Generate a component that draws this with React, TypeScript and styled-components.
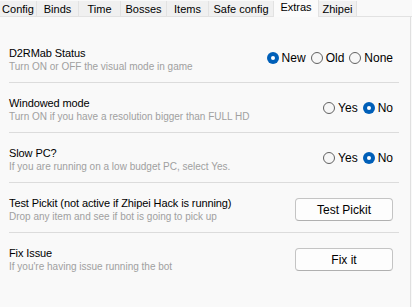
import { useState } from "react";
import styled, { createGlobalStyle } from "styled-components";

const GlobalStyle = createGlobalStyle`
  html, body {
    margin: 0;
    padding: 0;
    background: #f9f9f9;
  }
  body {
    font-family: "Liberation Sans", Arial, sans-serif;
  }
`;

const Window = styled.div`
  width: 412px;
  height: 307px;
  display: flex;
  flex-direction: column;
  background: #f9f9f9;
  overflow: hidden;
`;

const TabBar = styled.div`
  display: flex;
  align-items: flex-end;
  height: 17px;
  flex-shrink: 0;
`;

const Tab = styled.div<{ $active?: boolean; $w: number }>`
  box-sizing: border-box;
  width: ${({ $w }) => $w}px;
  height: ${({ $active }) => ($active ? "17px" : "16px")};
  display: flex;
  align-items: ${({ $active }) => ($active ? "flex-start" : "center")};
  justify-content: center;
  padding-top: 1px;
  font-size: 11px;
  color: #000;
  background: ${({ $active }) => ($active ? "#fbfbfb" : "#f0f0f0")};
  border-right: 1px solid #e2e2e2;
  border-bottom: ${({ $active }) => ($active ? "none" : "1px solid #e2e2e2")};
  white-space: nowrap;
`;

const TabFill = styled.div`
  flex: 1;
  height: 16px;
  border-bottom: 1px solid #e2e2e2;
`;

const Panel = styled.div`
  flex: 1;
  width: 411px;
  box-sizing: border-box;
  border-right: 1px solid #e0e0e0;
  padding: 16px 11px 0 9px;
`;

const Row = styled.div<{ $last?: boolean }>`
  display: flex;
  align-items: center;
  justify-content: space-between;
  height: 49px;
  border-bottom: ${({ $last }) => ($last ? "none" : "1px solid #dcdcdc")};
`;

const TextBlock = styled.div`
  display: flex;
  flex-direction: column;
  padding-top: 4px;
`;

const Title = styled.div`
  font-size: 11px;
  line-height: 13px;
  letter-spacing: -0.1px;
  color: #000;
`;

const Subtitle = styled.div`
  font-size: 10px;
  line-height: 13px;
  color: #a0a0a0;
`;

const RadioGroup = styled.div`
  display: flex;
  align-items: center;
  gap: 5px;
  margin-right: 6px;
`;

const RadioLabel = styled.label`
  display: flex;
  align-items: center;
  gap: 3px;
  font-size: 12px;
  color: #000;
  cursor: pointer;
`;

const RadioDot = styled.span<{ $on: boolean }>`
  box-sizing: border-box;
  width: 12px;
  height: 12px;
  border-radius: 50%;
  display: inline-flex;
  align-items: center;
  justify-content: center;
  border: ${({ $on }) => ($on ? "none" : "1px solid #616161")};
  background: ${({ $on }) => ($on ? "#005fb8" : "#f7f7f7")};
  &::after {
    content: "";
    width: 4px;
    height: 4px;
    border-radius: 50%;
    background: #fff;
    display: ${({ $on }) => ($on ? "block" : "none")};
  }
`;

const ActionButton = styled.button`
  box-sizing: border-box;
  width: 98px;
  height: 23px;
  margin-right: 6px;
  margin-top: 4px;
  background: #fdfdfd;
  border: 1px solid #c4c4c4;
  border-bottom-color: #b0b0b0;
  border-radius: 4px;
  font-family: "Liberation Sans", Arial, sans-serif;
  font-size: 12px;
  color: #000;
  cursor: pointer;
`;

const tabs = [
  { name: "Config", w: 37 },
  { name: "Binds", w: 42 },
  { name: "Time", w: 42 },
  { name: "Bosses", w: 46 },
  { name: "Items", w: 42 },
  { name: "Safe config", w: 65 },
  { name: "Extras", w: 45 },
  { name: "Zhipei", w: 38 },
];

interface RadiosProps {
  options: string[];
  value: string;
  onChange: (v: string) => void;
}

const Radios = ({ options, value, onChange }: RadiosProps) => (
  <RadioGroup>
    {options.map((o) => (
      <RadioLabel key={o} onClick={() => onChange(o)}>
        <RadioDot $on={o === value} />
        {o}
      </RadioLabel>
    ))}
  </RadioGroup>
);

export default function App() {
  const [status, setStatus] = useState("New");
  const [windowed, setWindowed] = useState("No");
  const [slow, setSlow] = useState("No");

  return (
    <Window>
      <GlobalStyle />
      <TabBar>
        {tabs.map((t) => (
          <Tab key={t.name} $w={t.w} $active={t.name === "Extras"}>
            {t.name}
          </Tab>
        ))}
        <TabFill />
      </TabBar>
      <Panel>
        <Row>
          <TextBlock>
            <Title>D2RMab Status</Title>
            <Subtitle>Turn ON or OFF the visual mode in game</Subtitle>
          </TextBlock>
          <Radios options={["New", "Old", "None"]} value={status} onChange={setStatus} />
        </Row>
        <Row>
          <TextBlock>
            <Title>Windowed mode</Title>
            <Subtitle>Turn ON if you have a resolution bigger than FULL HD</Subtitle>
          </TextBlock>
          <Radios options={["Yes", "No"]} value={windowed} onChange={setWindowed} />
        </Row>
        <Row>
          <TextBlock>
            <Title>Slow PC?</Title>
            <Subtitle>If you are running on a low budget PC, select Yes.</Subtitle>
          </TextBlock>
          <Radios options={["Yes", "No"]} value={slow} onChange={setSlow} />
        </Row>
        <Row>
          <TextBlock>
            <Title>Test Pickit (not active if Zhipei Hack is running)</Title>
            <Subtitle>Drop any item and see if bot is going to pick up</Subtitle>
          </TextBlock>
          <ActionButton>Test Pickit</ActionButton>
        </Row>
        <Row $last>
          <TextBlock>
            <Title>Fix Issue</Title>
            <Subtitle>If you're having issue running the bot</Subtitle>
          </TextBlock>
          <ActionButton>Fix it</ActionButton>
        </Row>
      </Panel>
    </Window>
  );
}
